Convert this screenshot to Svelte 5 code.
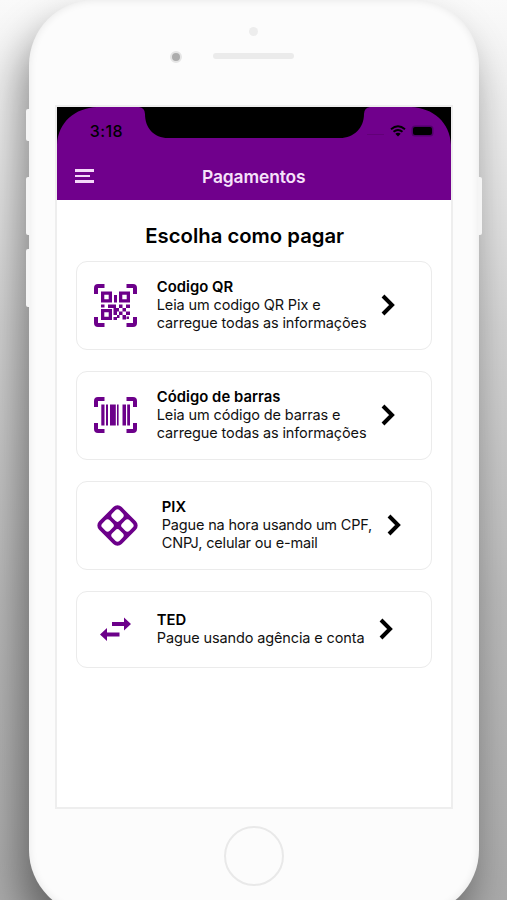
<script lang="ts">
	type Option = {
		kind: 'qr' | 'barcode' | 'pix' | 'ted';
		title: string;
		lines: string[];
	};

	const options: Option[] = [
		{
			kind: 'qr',
			title: 'Codigo QR',
			lines: ['Leia um codigo QR Pix e', 'carregue todas as informações']
		},
		{
			kind: 'barcode',
			title: 'Código de barras',
			lines: ['Leia um código de barras e', 'carregue todas as informações']
		},
		{
			kind: 'pix',
			title: 'PIX',
			lines: ['Pague na hora usando um CPF,', 'CNPJ, celular ou e-mail']
		},
		{ kind: 'ted', title: 'TED', lines: ['Pague usando agência e conta'] }
	];
</script>

<div class="stage">
	<div class="phone">
		<span class="key mute"></span>
		<span class="key up"></span>
		<span class="key down"></span>
		<span class="key power"></span>

		<div class="top">
			<span class="sensor"></span>
			<div class="ear">
				<span class="camera"></span>
				<span class="speaker"></span>
			</div>
		</div>

		<div class="screen">
			<header>
				<svg class="notch" viewBox="0 0 394 45" aria-hidden="true">
					<path d="M0 0H40C18 1 1 15 0 38Z" />
					<path d="M394 0H354C376 1 393 15 394 38Z" />
					<path d="M82 0H313Q307 1 307 7C307 21 297 31 283 31H111C97 31 88 21 88 7Q88 1 82 0Z" />
				</svg>
				<div class="status">
					<span class="time">3:18</span>
					<span class="signal"></span>
					<svg class="wifi" viewBox="0 0 16 12" aria-hidden="true">
						<path d="M1 4.3Q8-1.6 15 4.3M3.5 6.8Q8 3 12.5 6.8" fill="none" stroke="#000" stroke-width="1.9" />
						<path d="M5.3 8.8Q8 6.6 10.7 8.8L8 11.4Z" />
					</svg>
					<span class="battery"></span>
				</div>
				<div class="bar">
					<button class="menu" aria-label="Menu">
						<span></span>
						<span class="short"></span>
						<span></span>
					</button>
					<h1>Pagamentos</h1>
				</div>
			</header>

			<main>
				<h2>Escolha como pagar</h2>
				<div class="list">
					{#each options as option}
						<div class="card {option.kind}">
							<div class="icon">
								{#if option.kind === 'qr'}
									<svg width="43" height="43" viewBox="0 0 43 43">
										<path class="line" d="M2 10V4Q2 2 4 2H10.5M32.5 2H39Q41 2 41 4V10M41 33V39Q41 41 39 41H32.5M10.5 41H4Q2 41 2 39V33" />
										<path
											fill-rule="evenodd"
											d="M7 7.5H18V18.5H7ZM10.3 10.8V15.2H14.7V10.8ZM25 7.5H36V18.5H25ZM28.3 10.8V15.2H32.7V10.8ZM7 25H18V36H7ZM10.3 28.3V32.7H14.7V28.3Z"
										/>
										<path
											d="M20 11H23V18.5H20ZM7 20.5H10.5V23.5H7ZM14 20.5H22V24H25V27.5H23V31H19.5V24H14ZM25 20.5H28.5V24H25ZM32 20.5H36V24H32ZM28.5 24H32V27.5H28.5ZM25 27.5H28.5V31H25ZM32 27.5H36V31H32ZM28.5 31H32V35.5H28.5ZM19.5 33H23V31H25.5V34H23V36H19.5ZM32.5 32.5H35V35H32.5Z"
										/>
									</svg>
								{:else if option.kind === 'barcode'}
									<svg width="43" height="36" viewBox="0 0 43 36">
										<path class="line" d="M2 10V4Q2 2 4 2H10.5M32.5 2H39Q41 2 41 4V10M41 26V32Q41 34 39 34H32.5M10.5 34H4Q2 34 2 32V26" />
										<path d="M7.3 7.5H10.5V28.5H7.3ZM12 7.5H14V28.5H12ZM16 7.5H21.8V28.5H16ZM23 7.5H24.6V28.5H23ZM28.5 7.5H32V28.5H28.5ZM33.2 7.5H36V28.5H33.2Z" />
									</svg>
								{:else if option.kind === 'pix'}
									<svg width="41" height="41" viewBox="-20.5 -20.5 41 41">
										<g transform="rotate(45)">
											<rect x="-16" y="-16" width="32" height="32" rx="6" />
											<g fill="#fff">
												<rect x="-12.2" y="-12.2" width="10.4" height="10.4" rx="3" />
												<rect x="1.8" y="-12.2" width="10.4" height="10.4" rx="3" />
												<rect x="-12.2" y="1.8" width="10.4" height="10.4" rx="3" />
												<rect x="1.8" y="1.8" width="10.4" height="10.4" rx="3" />
											</g>
										</g>
									</svg>
								{:else}
									<svg width="31" height="24" viewBox="0 0 31 24">
										<path d="M12 5H24V.5L31 7L24 13.5V9H12ZM19.5 15.5H7V11L0 17.5L7 24V19.5H19.5Z" />
									</svg>
								{/if}
							</div>
							<div class="text">
								<h3>{option.title}</h3>
								{#each option.lines as line}
									<p>{line}</p>
								{/each}
							</div>
							<svg class="chevron" width="14" height="22" viewBox="0 0 14 22" aria-hidden="true">
								<path d="M2 2L11 11L2 20" />
							</svg>
						</div>
					{/each}
				</div>
			</main>
		</div>

		<div class="home"></div>
	</div>
</div>

<style>
	:global(body) {
		margin: 0;
	}

	.stage {
		height: 900px;
		box-sizing: border-box;
		padding-left: 28.5px;
		overflow: hidden;
		background: linear-gradient(#fafafa 0, #ebebeb 130px, #d2d2d2 330px, #b9b9b9 600px, #aaa 900px);
		font-family: Inter, 'Liberation Sans', sans-serif;
	}

	.phone {
		position: relative;
		width: 450.5px;
		height: 915px;
		border-radius: 65px;
		background: #fcfcfc;
		box-shadow:
			inset 0 0 9px rgba(0, 0, 0, 0.09),
			-8px 24px 40px rgba(0, 0, 0, 0.42);
		display: flex;
		flex-direction: column;
		align-items: center;
	}

	.key {
		position: absolute;
		left: -2.5px;
		width: 3.5px;
		height: 58px;
		border-radius: 2px 0 0 2px;
		background: #f5f5f5;
	}

	.mute {
		top: 109px;
		height: 32px;
	}

	.up {
		top: 177px;
	}

	.down {
		top: 249px;
	}

	.power {
		top: 177px;
		left: auto;
		right: -2.5px;
		border-radius: 0 2px 2px 0;
	}

	.top {
		width: 156px;
		height: 105px;
		box-sizing: border-box;
		padding: 27px 0 0;
		display: flex;
		gap: 31px;
		align-self: flex-start;
		margin-left: 141.5px;
	}

	.sensor {
		width: 8px;
		height: 8px;
		margin-top: 24px;
		border: 2px solid #e5e5e5;
		border-radius: 50%;
		background: #adadad;
	}

	.ear {
		display: flex;
		flex-direction: column;
		align-items: center;
		gap: 17px;
	}

	.camera {
		width: 9px;
		height: 9px;
		border-radius: 50%;
		background: #ededed;
	}

	.speaker {
		width: 81px;
		height: 6px;
		border-radius: 3px;
		background: #ebebeb;
	}

	.screen {
		width: 394px;
		height: 700px;
		border: 2px solid #eee;
		background: #fff;
		flex: none;
	}

	header {
		position: relative;
		height: 92.5px;
		background: #70008c;
	}

	.notch {
		position: absolute;
		top: 0;
		left: 0;
		width: 394px;
		height: 45px;
	}

	.status {
		position: relative;
		display: flex;
		align-items: center;
		height: 48px;
		padding: 0 18.5px 0 33px;
	}

	.time {
		flex: 1;
		font-size: 16px;
		font-weight: 500;
		letter-spacing: 0.4px;
	}

	.signal {
		width: 17px;
		height: 1px;
		margin: 6px 6px 0 0;
		background: #620078;
	}

	.wifi {
		width: 16px;
		height: 12px;
		margin-right: 7px;
	}

	.battery {
		width: 19px;
		height: 8px;
		border-radius: 2px;
		background: #000;
		box-shadow: 0 0 0 1.5px #50006a;
	}

	.bar {
		display: flex;
		align-items: center;
		height: 42px;
	}

	.menu {
		display: flex;
		flex-direction: column;
		gap: 3px;
		width: 19px;
		margin-left: 18px;
		padding: 0;
		border: 0;
		background: none;
	}

	.menu span {
		width: 19px;
		height: 2.5px;
		background: #f4d9f9;
	}

	.menu .short {
		width: 15px;
	}

	h1 {
		flex: 1;
		margin: 0 37px 0 0;
		color: #f6e2fa;
		font-size: 17.4px;
		font-weight: 600;
		text-align: center;
		letter-spacing: -0.1px;
	}

	main {
		padding: 22.5px 18.5px 0 19.5px;
	}

	h2 {
		margin: 0 0 10.5px;
		padding-right: 19px;
		font-size: 20.3px;
		line-height: 28px;
		font-weight: 600;
		text-align: center;
	}

	.list {
		display: flex;
		flex-direction: column;
		gap: 21px;
	}

	.card {
		display: flex;
		align-items: center;
		height: 89px;
		box-sizing: border-box;
		padding-left: 16.5px;
		border: 1.5px solid #ebebeb;
		border-radius: 11px;
		color: #111;
	}

	.card.ted {
		height: 77px;
	}

	.icon {
		display: flex;
		justify-content: center;
		width: 43px;
		margin-right: 20px;
		fill: #6c008a;
	}

	.pix .icon {
		width: 48px;
	}

	.line {
		fill: none;
		stroke: #6c008a;
		stroke-width: 4;
	}

	.text {
		font-size: 14.5px;
		line-height: 18px;
		letter-spacing: -0.12px;
		white-space: nowrap;
	}

	.pix .text {
		letter-spacing: -0.17px;
	}

	h3 {
		margin: 0;
		font-size: 14.8px;
		font-weight: 600;
		letter-spacing: 0.05px;
		color: #000;
	}

	p {
		margin: 0;
	}

	.chevron {
		margin-left: 14.5px;
		fill: none;
		stroke: #000;
		stroke-width: 4;
	}

	.home {
		width: 56px;
		height: 56px;
		margin-top: 16.5px;
		border: 2.5px solid #e9e9e9;
		border-radius: 50%;
	}
</style>
